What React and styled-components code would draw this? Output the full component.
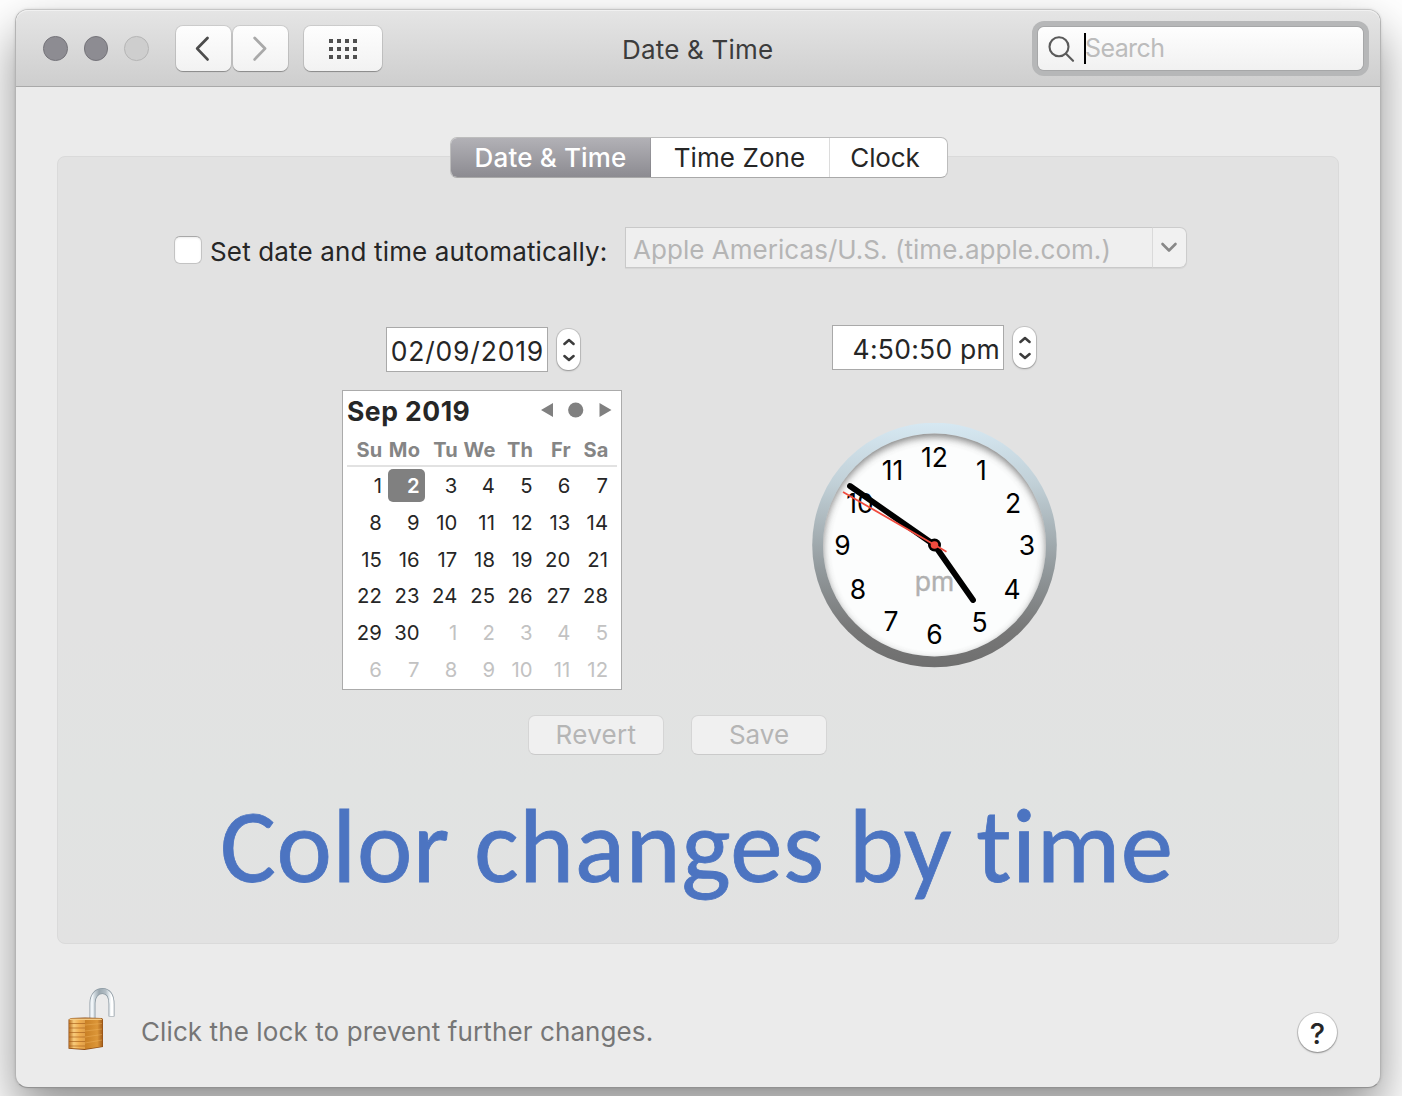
import React from "react";
import styled, { createGlobalStyle, css } from "styled-components";

const GlobalStyle = createGlobalStyle`
  * { box-sizing: border-box; }
  html, body { margin: 0; padding: 0; }
  body {
    background: #ffffff;
    overflow: hidden;
    font-family: Inter, "Liberation Sans", sans-serif;
    color: #262626;
  }
`;

const Desktop = styled.div`
  width: 1402px;
  height: 1096px;
  padding: 9px 0 0 15px;
  overflow: hidden;
`;

const Window = styled.main`
  width: 1366px;
  height: 1079px;
  display: flex;
  flex-direction: column;
  border: 1px solid #b4b4b4;
  border-top-color: #c6c6c6;
  border-bottom-color: #929292;
  border-radius: 13px;
  background: #ebebeb;
  box-shadow: 0 24px 50px rgba(0, 0, 0, 0.44), 0 0 3px rgba(0, 0, 0, 0.12);
`;

const TitleBar = styled.header`
  height: 77px;
  flex: none;
  display: flex;
  align-items: flex-start;
  padding: 16px 17px 0 27px;
  border-bottom: 1px solid #a9a9a9;
  border-radius: 12px 12px 0 0;
  background: linear-gradient(#e5e5e5, #cecece);
  box-shadow: inset 0 1px 0 #f1f1f1;
`;

const Lights = styled.div`
  display: flex;
  gap: 16px;
  padding-top: 10px;
  width: 132.5px;
`;

const Light = styled.span`
  width: 24.6px;
  height: 24.6px;
  border-radius: 50%;
  border: 1px solid ${(p) => (p.$off ? "#b5b5b5" : "#75747a")};
  background: ${(p) => (p.$off ? "#cecece" : "#8d8c92")};
`;

const ToolButton = styled.button`
  width: ${(p) => p.$w}px;
  height: 45px;
  margin: 0 ${(p) => p.$gap || 0}px 0 0;
  padding: 0;
  display: flex;
  align-items: center;
  justify-content: center;
  border: 0;
  border-radius: 7px;
  background: linear-gradient(#fefefe, #f2f2f2);
  box-shadow: 0 0 0 1px rgba(0, 0, 0, 0.09), 0 1px 1px rgba(0, 0, 0, 0.28);
`;

const DotGrid = styled.span`
  display: grid;
  grid-template-columns: repeat(4, 4px);
  grid-auto-rows: 4px;
  gap: 4px;
`;

const Dot = styled.i`
  background: #4f4f4f;
`;

const Title = styled.h1`
  flex: 1;
  margin: 8px 0 0 240.5px;
  font-size: 26px;
  line-height: 32px;
  font-weight: 400;
  letter-spacing: 0.2px;
  color: #3c3c3c;
`;

const SearchField = styled.label`
  width: 325px;
  height: 43px;
  margin-top: 1px;
  padding-left: 10px;
  display: flex;
  align-items: center;
  border-radius: 6px;
  background: linear-gradient(#fefefe, #f1f1f1);
  box-shadow: 0 0 0 1px #a6a7a8, 0 0 0 6px #b6b7b8;
`;

const Caret = styled.span`
  width: 2px;
  height: 31px;
  margin: -1px 0 0 9px;
  background: #000;
`;

const Placeholder = styled.span`
  margin-top: -1px;
  margin-left: -1px;
  font-size: 25px;
  line-height: 30px;
  letter-spacing: -0.6px;
  color: #bcbcbc;
`;

const Body = styled.section`
  flex: 1;
  padding: 50px 41px 0;
  display: flex;
  flex-direction: column;
`;

const Tabs = styled.nav`
  position: relative;
  z-index: 1;
  width: 498px;
  height: 41px;
  margin: 0 auto -22px 393px;
  flex: none;
  display: flex;
  border-radius: 7px;
  overflow: hidden;
  border: 1px solid #bdbdbd;
  border-bottom-color: #a9a9a9;
  background: #fff;
`;

const Tab = styled.span`
  width: ${(p) => p.$w}px;
  flex: none;
  text-align: center;
  font-size: 26px;
  line-height: 40px;
  letter-spacing: ${(p) => p.$ls || 0}px;
  border-left: ${(p) => (p.$divider ? "1px solid #dcdcdc" : "0")};
  padding-right: ${(p) => p.$pr || 0}px;
  ${(p) =>
    p.$active &&
    css`
      margin: -1px 0 -1px -1px;
      line-height: 42px;
      font-weight: 500;
      color: #fff;
      background: linear-gradient(#b3b2b7, #8b8a90);
      box-shadow: inset 0 0 0 1px rgba(100, 100, 105, 0.25);
    `}
`;

const Panel = styled.div`
  height: 788px;
  flex: none;
  border: 1px solid #dadada;
  border-radius: 8px;
  background: linear-gradient(#e2e2e2 60%, #e1e3e2 80%, #e2e2e2);
`;

const AutoRow = styled.div`
  display: flex;
  height: 41px;
  margin: 70px 0 0 116px;
`;

const Checkbox = styled.span`
  width: 28px;
  height: 28px;
  flex: none;
  margin-top: 9px;
  border: 1px solid #c3c3c3;
  border-top-color: #a8a8a8;
  border-radius: 6px;
  background: #fff;
  box-shadow: inset 0 1px 2px rgba(0, 0, 0, 0.08);
`;

const AutoLabel = styled.span`
  width: 423px;
  flex: none;
  padding: 9px 0 0 8px;
  font-size: 26px;
  line-height: 32px;
  letter-spacing: ${(p) => p.$ls}px;
  white-space: nowrap;
`;

const Combo = styled.div`
  width: 562px;
  flex: none;
  height: 41px;
  display: flex;
  border-radius: 0 7px 7px 0;
  box-shadow: 0 1px 1px rgba(0, 0, 0, 0.06);
`;

const ComboText = styled.span`
  flex: 1;
  padding-left: 7px;
  border: 1px solid #c9c9c9;
  border-right-color: #dadada;
  background: #efefef;
  color: #b5b5b5;
  font-size: 26px;
  line-height: 43px;
  letter-spacing: 0.04px;
  white-space: nowrap;
`;

const ComboArrow = styled.span`
  width: 34px;
  padding-right: 1px;
  display: flex;
  align-items: center;
  justify-content: center;
  border: 1px solid #cccccc;
  border-left: 0;
  border-radius: 0 7px 7px 0;
  background: #f1f1f1;
`;

const Pickers = styled.div`
  display: flex;
  align-items: flex-start;
  gap: 189px;
  height: 365px;
  margin: 57px 0 0 284px;
`;

const DateColumn = styled.div`
  width: 281px;
  padding-top: 2px;
`;

const TimeColumn = styled.div`
  width: 245px;
  display: flex;
  flex-direction: column;
`;

const FieldRow = styled.div`
  display: flex;
  gap: 9px;
  margin-left: ${(p) => p.$x}px;
  margin-bottom: ${(p) => p.$below}px;
`;

const Field = styled.span`
  width: ${(p) => p.$w}px;
  height: 45px;
  padding-right: 3px;
  text-align: right;
  border: 1px solid #a9a9a9;
  background: #fff;
  font-size: 26.5px;
  line-height: 47px;
  letter-spacing: ${(p) => p.$ls}px;
  white-space: nowrap;
`;

const StepperShell = styled.span`
  width: 23px;
  height: 41px;
  margin-top: 2px;
  display: flex;
  justify-content: center;
  align-items: center;
  border-radius: 11px;
  background: #fff;
  box-shadow: 0 0 0 1px rgba(0, 0, 0, 0.12), 0 1px 2px rgba(0, 0, 0, 0.25);
`;

const CalendarBox = styled.div`
  width: 280px;
  height: 300px;
  border: 1px solid #ababab;
  background: #fff;
`;

const CalendarHead = styled.div`
  height: 38px;
  display: flex;
  align-items: center;
  justify-content: space-between;
  padding: 0 9.5px 0 4px;
`;

const Month = styled.strong`
  padding-top: 1px;
  font-size: 26.5px;
  line-height: 38px;
  font-weight: 700;
  letter-spacing: ${(p) => p.$ls}px;
`;

const Week = styled.div`
  display: grid;
  grid-template-columns: repeat(7, 37.7px);
  margin: 0 4px;
  padding-left: 3.3px;
`;

const WeekHead = styled(Week)`
  height: 38px;
  border-bottom: 2px solid #e2e2e2;
  margin-bottom: 2px;
`;

const WeekDay = styled.span`
  padding-right: 5.5px;
  display: flex;
  justify-content: flex-end;
  font-size: 20px;
  line-height: 42px;
  font-weight: 700;
  letter-spacing: 0.2px;
  color: #858585;
`;

const Day = styled.span`
  width: 37px;
  height: 33px;
  margin-bottom: 3.8px;
  padding-right: 5.3px;
  text-align: right;
  font-size: 20.3px;
  line-height: 34px;
  font-weight: ${(p) => (p.$selected ? 600 : 400)};
  letter-spacing: 0.1px;
  color: ${(p) => (p.$selected ? "#fff" : p.$other ? "#c2c2c2" : "#262626")};
  background: ${(p) => (p.$selected ? "#808080" : "transparent")};
  border-radius: 5px;
`;

const Actions = styled.div`
  display: flex;
  gap: 27px;
  margin: 25px 0 0 470px;
`;

const PushButton = styled.button`
  width: 136px;
  height: 40px;
  padding: 0;
  border: 1px solid #d5d5d5;
  border-bottom-color: #cacaca;
  border-radius: 7px;
  background: #f0f0f0;
  color: #b5b5b5;
  font-family: inherit;
  font-size: 26px;
  line-height: 38px;
  letter-spacing: ${(p) => p.$ls}px;
`;

const Caption = styled.p`
  margin: 31px 0 0 162px;
  font-family: Carlito, Lato, sans-serif;
  font-size: 105px;
  line-height: 120px;
  letter-spacing: ${(p) => p.$ls}px;
  font-variant-ligatures: none;
  color: #4c74c1;
  -webkit-text-stroke: 0.8px #4c74c1;
  white-space: nowrap;
`;

const Footer = styled.footer`
  display: flex;
  height: 70px;
  margin: 43px 0 0 10px;
`;

const FooterText = styled.span`
  flex: 1;
  padding: 28px 0 0 22px;
  font-size: 26px;
  line-height: 33px;
  letter-spacing: ${(p) => p.$ls}px;
  color: #767676;
`;

const HelpButton = styled.button`
  width: 39px;
  height: 39px;
  margin: 26px 2px 0 0;
  padding: 0;
  border: 0;
  border-radius: 50%;
  background: #fff;
  box-shadow: 0 0 0 1px rgba(0, 0, 0, 0.12), 0 1px 2px rgba(0, 0, 0, 0.35);
  color: #262626;
  font-family: inherit;
  font-size: 29px;
  line-height: 41px;
  font-weight: 500;
`;

const Chevron = ({ dir, color }) => (
  <svg width="16" height="26" viewBox="0 0 16 26" fill="none" stroke={color} strokeWidth="2.8" strokeLinecap="round" strokeLinejoin="round">
    <path d={dir === "left" ? "M12.5 2 2.2 12.6l10.3 10.8" : "M2.7 2 13 12.6 2.7 23.4"} />
  </svg>
);

const Stepper = () => (
  <StepperShell>
    <svg width="14" height="28" viewBox="0 0 14 28" fill="none" stroke="#3c3c3c" strokeWidth="2.5" strokeLinecap="round" strokeLinejoin="round">
      <path d="M2.4 8 7 4l4.6 4M2.4 20 7 24l4.6-4" />
    </svg>
  </StepperShell>
);

const days = [
  ...Array.from({ length: 30 }, (_, i) => ({ n: i + 1 })),
  ...Array.from({ length: 12 }, (_, i) => ({ n: i + 1, other: true })),
];

const Calendar = () => (
  <CalendarBox>
    <CalendarHead>
      <Month $ls={0.5}>Sep 2019</Month>
      <svg width="72" height="16" viewBox="0 0 72 16" fill="#808080">
        <path d="M1 8 13 1v14zM59.5 1v14l12-7z" />
        <circle cx="35.7" cy="8" r="7.6" />
      </svg>
    </CalendarHead>
    <WeekHead>
      {["Su", "Mo", "Tu", "We", "Th", "Fr", "Sa"].map((d) => (
        <WeekDay key={d}>{d}</WeekDay>
      ))}
    </WeekHead>
    <Week>
      {days.map((d, i) => (
        <Day key={i} $other={d.other} $selected={i === 1}>
          {d.n}
        </Day>
      ))}
    </Week>
  </CalendarBox>
);

const numerals = [
  ["12", 122.5, 34], ["1", 169.5, 47], ["2", 201, 80], ["3", 215, 122],
  ["4", 200, 166.5], ["5", 167.5, 199], ["6", 122.5, 211.5], ["7", 79, 198.5],
  ["8", 46, 166.5], ["9", 30.5, 122], ["10", 48, 80], ["11", 80.5, 47],
];

const Clock = () => (
  <svg width="246" height="246" viewBox="0 0 246 246" fontFamily="Inter, sans-serif" fontSize="26.5" textAnchor="middle">
    <defs>
      <linearGradient id="rim" x1="0" y1="0" x2="0" y2="1">
        <stop offset="0" stopColor="#d6e8f2" />
        <stop offset="0.25" stopColor="#c1d0d7" />
        <stop offset="0.6" stopColor="#92999c" />
        <stop offset="0.85" stopColor="#777777" />
        <stop offset="1" stopColor="#6f6f6f" />
      </linearGradient>
      <clipPath id="face"><circle cx="122.5" cy="122" r="111.5" /></clipPath>
      <filter id="soft" x="-20%" y="-20%" width="140%" height="140%"><feGaussianBlur stdDeviation="4" /></filter>
    </defs>
    <circle cx="122.5" cy="122" r="122.3" fill="url(#rim)" />
    <circle cx="122.5" cy="122" r="111.5" fill="#fcfdfd" />
    <g clipPath="url(#face)">
      <circle cx="122.5" cy="125.5" r="118" fill="none" stroke="#4c4c4c" strokeWidth="11" opacity="0.8" filter="url(#soft)" />
    </g>
    {numerals.map(([t, x, y]) => (
      <text key={t} x={x} y={y + 9.5} fill="#000">{t}</text>
    ))}
    <text x="122.5" y="168" fill="#b0b0b0" stroke="#b0b0b0" strokeWidth="0.4">pm</text>
    <g strokeLinecap="round">
      <path d="M122.5 122 38 63M122.5 122 161 177" stroke="#000" strokeWidth="5.8" />
      <circle cx="122.5" cy="122" r="6.5" fill="#000" />
      <path d="M134.5 128.800 31 69" stroke="#f04b3e" strokeWidth="1.8" strokeLinecap="butt" />
      <circle cx="122.5" cy="122" r="3.8" fill="#f04b3e" />
    </g>
  </svg>
);

const Padlock = () => (
  <svg width="52" height="66" viewBox="0 0 52 66">
    <defs>
      <linearGradient id="brassL" x1="0" x2="1">
        <stop offset="0" stopColor="#b96f22" />
        <stop offset="0.3" stopColor="#f8cb7b" />
        <stop offset="0.65" stopColor="#efad50" />
        <stop offset="1" stopColor="#e0a04a" />
      </linearGradient>
      <linearGradient id="brassR" x1="0" x2="1">
        <stop offset="0" stopColor="#c98025" />
        <stop offset="0.7" stopColor="#dc9638" />
        <stop offset="1" stopColor="#a8611c" />
      </linearGradient>
      <linearGradient id="steel" x1="0" x2="1">
        <stop offset="0" stopColor="#f0f5f8" />
        <stop offset="0.12" stopColor="#c9d3d9" />
        <stop offset="0.35" stopColor="#9aa7af" />
        <stop offset="0.7" stopColor="#b4bfc6" />
        <stop offset="0.88" stopColor="#e3eaee" />
        <stop offset="1" stopColor="#ffffff" />
      </linearGradient>
    </defs>
    <path d="M25.5 32V16C25.5 8.5 30 4 35.500 4S44.500 8.500 44.500 17V29.500" fill="none" stroke="#8d9aa3" strokeWidth="6" />
    <path d="M25.500 32V16C25.500 8.500 30 4 35.500 4S44.500 8.500 44.500 17V29" fill="none" stroke="url(#steel)" strokeWidth="4.400" />
    <path d="M1.500 32.500 4 31 18 30.500 34.500 31 36 32V60L17.500 63 1.500 61.800z" fill="#8e4c14" />
    <path d="M2 32.500H18V62L2 61z" fill="url(#brassL)" />
    <path d="M18 32.500H35.500V59.500L18 62z" fill="url(#brassR)" />
    <path d="M3.500 31.500H34L35.500 33H2z" fill="#f3c982" />
    <path d="M2 36.500H18M2 41H18M2 45.500H18M2 50H18M2 54.500H18M2 59H18" stroke="#a75f1b" strokeWidth="1.100" opacity="0.650" />
    <path d="M18 38 35 36.500M18 44 35 42M18 50 35 47.500M18 56 35 53" stroke="#efb660" strokeWidth="0.900" opacity="0.500" />
  </svg>
);

export default function App() {
  return (
    <Desktop>
      <GlobalStyle />
      <Window>
        <TitleBar>
          <Lights>
            <Light />
            <Light />
            <Light $off />
          </Lights>
          <ToolButton $w={55} $gap={2}><Chevron dir="left" color="#4c4c4c" /></ToolButton>
          <ToolButton $w={55} $gap={16}><Chevron dir="right" color="#a9a9a9" /></ToolButton>
          <ToolButton $w={78}>
            <DotGrid>{Array.from({ length: 12 }, (_, i) => <Dot key={i} />)}</DotGrid>
          </ToolButton>
          <Title>Date &amp; Time</Title>
          <SearchField>
            <svg width="27" height="27" viewBox="0 0 27 27" fill="none" stroke="#5a5a5a" strokeWidth="2.1" strokeLinecap="round">
              <circle cx="11" cy="11.8" r="9.5" />
              <path d="m18 18.8 7 7" />
            </svg>
            <Caret />
            <Placeholder>Search</Placeholder>
          </SearchField>
        </TitleBar>
        <Body>
          <Tabs>
            <Tab $w={201} $ls={0.15} $active>Date &amp; Time</Tab>
            <Tab $w={178} $ls={0.1} $pr={1}>Time Zone</Tab>
            <Tab $w={119} $ls={-0.1} $pr={8} $divider>Clock</Tab>
          </Tabs>
          <Panel>
            <AutoRow>
              <Checkbox />
              <AutoLabel $ls={0.15}>Set date and time automatically:</AutoLabel>
              <Combo>
                <ComboText>Apple Americas/U.S. (time.apple.com.)</ComboText>
                <ComboArrow>
                  <svg width="18" height="12" viewBox="0 0 18 12" fill="none" stroke="#888" strokeWidth="2.6" strokeLinecap="round" strokeLinejoin="round">
                    <path d="m2.500 2 6.500 6.500L15.500 2" />
                  </svg>
                </ComboArrow>
              </Combo>
            </AutoRow>
            <Pickers>
              <DateColumn>
                <FieldRow $x={44} $below={18}>
                  <Field $w={162} $ls={0.8}>02/09/2019</Field>
                  <Stepper />
                </FieldRow>
                <Calendar />
              </DateColumn>
              <TimeColumn>
                <FieldRow $x={20} $below={53}>
                  <Field $w={172} $ls={0.25}>4:50:50 pm</Field>
                  <Stepper />
                </FieldRow>
                <Clock />
              </TimeColumn>
            </Pickers>
            <Actions>
              <PushButton $ls={0.3}>Revert</PushButton>
              <PushButton $ls={0}>Save</PushButton>
            </Actions>
            <Caption $ls={0.5}>Color changes by time</Caption>
          </Panel>
          <Footer>
            <Padlock />
            <FooterText $ls={0.1}>Click the lock to prevent further changes.</FooterText>
            <HelpButton>?</HelpButton>
          </Footer>
        </Body>
      </Window>
    </Desktop>
  );
}
